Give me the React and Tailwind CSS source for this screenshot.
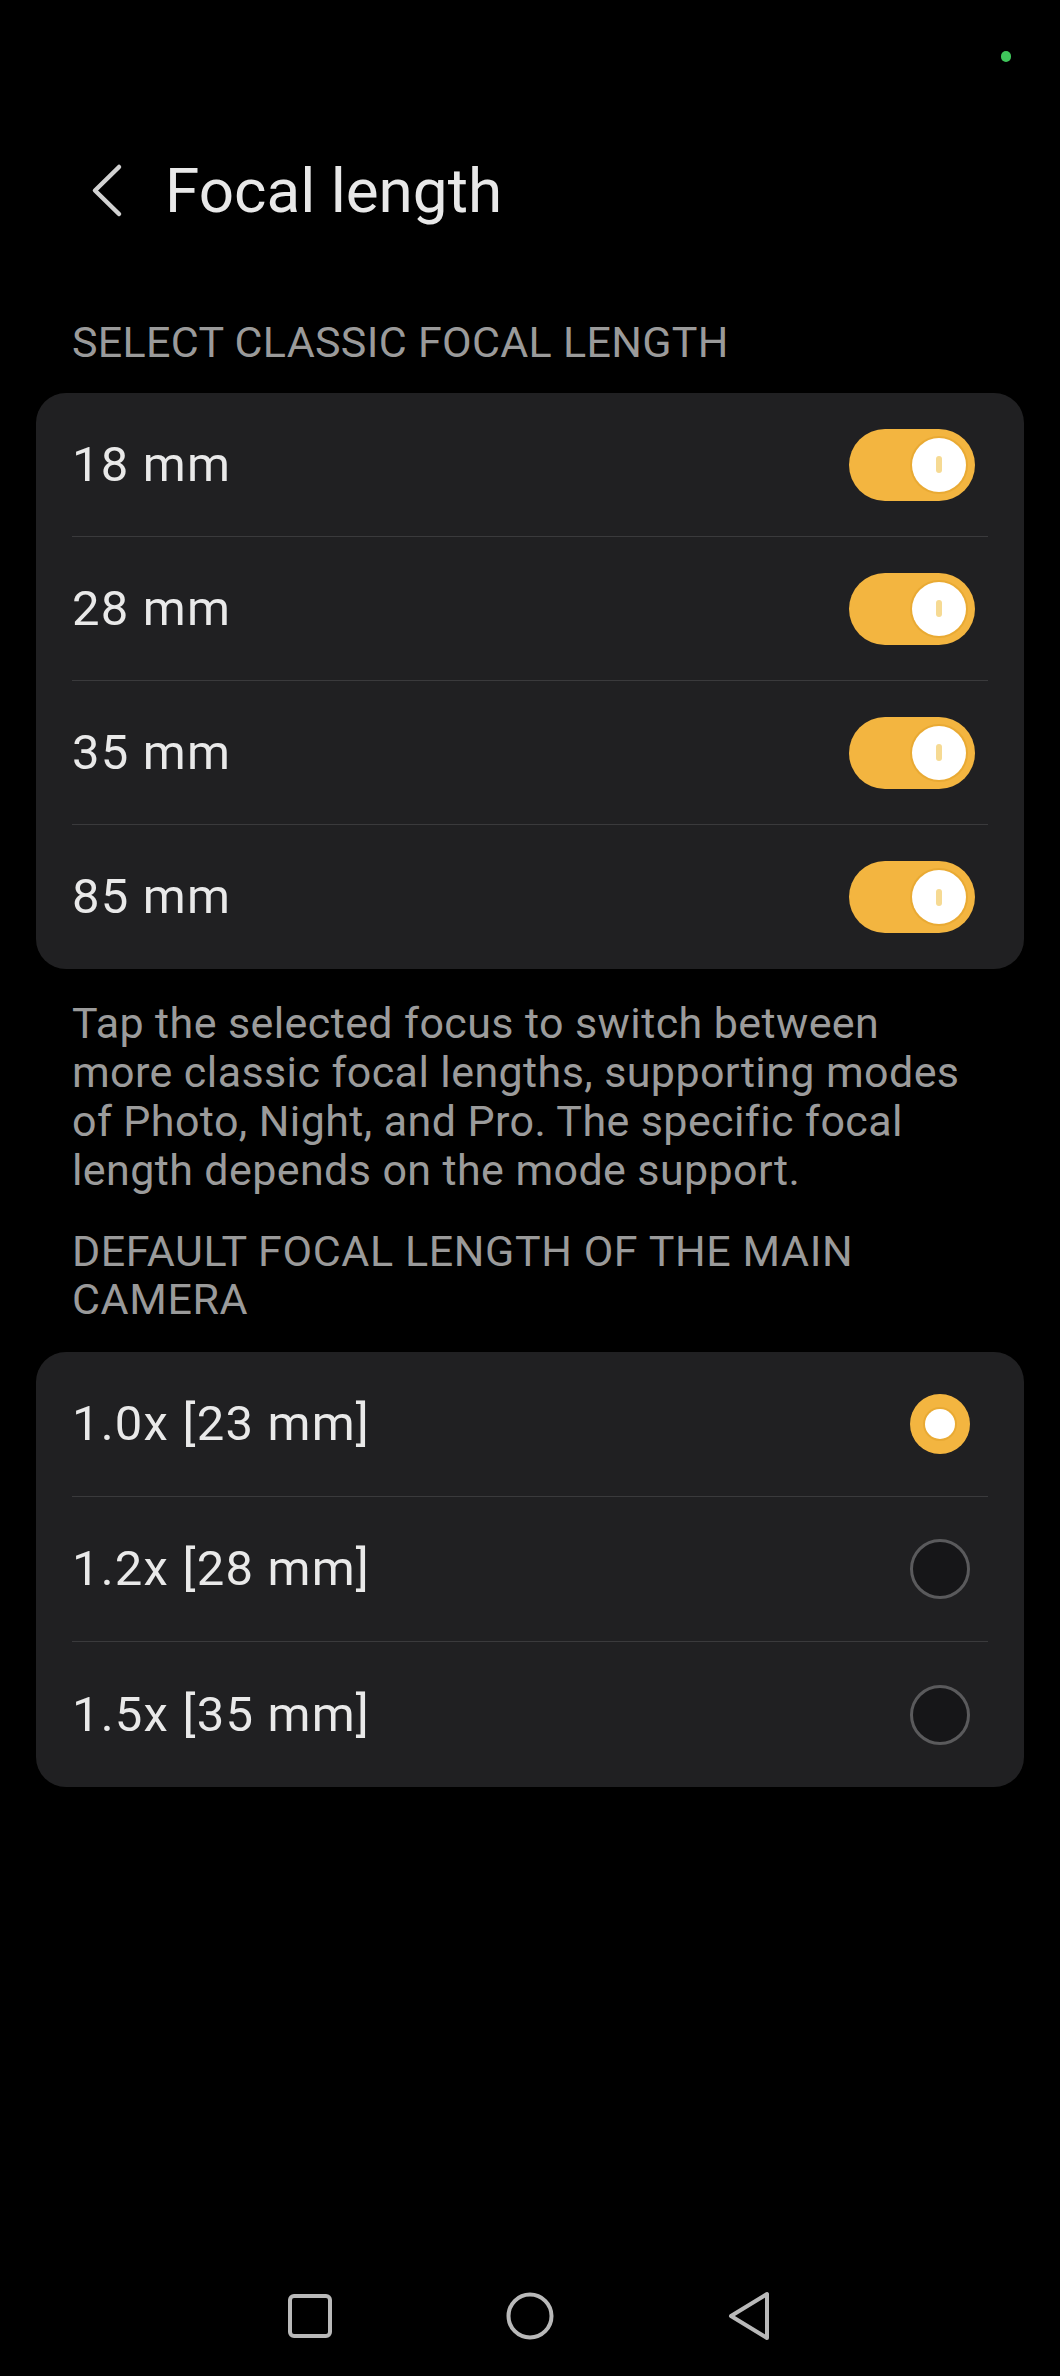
import React, { useState } from 'react';

const lengths = ['18 mm', '28 mm', '35 mm', '85 mm'];
const zooms = ['1.0x [23 mm]', '1.2x [28 mm]', '1.5x [35 mm]'];

function Toggle({ on, onClick }) {
    return (
        <button
            onClick={onClick}
            className={`mr-[13px] w-[126px] h-[72px] rounded-full flex items-center px-[9px] ${on ? 'bg-[#f3b540] justify-end' : 'bg-[#4a4a4c] justify-start'}`}
        >
            <span className="w-[54px] h-[54px] rounded-full bg-white flex items-center justify-center shadow-[0_0_0_2px_rgba(214,150,30,0.35)]">
                <span className="w-[6px] h-[17px] rounded-full bg-[#f6da93]" />
            </span>
        </button>
    );
}

function Radio({ checked }) {
    if (checked) {
        return (
            <span className="mr-[18px] w-[60px] h-[60px] rounded-full bg-[#f3b540] flex items-center justify-center">
                <span className="w-[30px] h-[30px] rounded-full bg-white shadow-[0_0_0_2px_rgba(214,150,30,0.35)]" />
            </span>
        );
    }
    return <span className="mr-[18px] w-[60px] h-[60px] rounded-full border-[3px] border-[#5a5a5c] bg-[#161618]" />;
}

export default function App() {
    const [enabled, setEnabled] = useState([true, true, true, true]);
    const [selected, setSelected] = useState(0);

    const flip = (i) => setEnabled(enabled.map((v, j) => (j === i ? !v : v)));

    return (
        <div className="min-h-[2376px] bg-black flex flex-col font-['Roboto',sans-serif]">
            {/* status bar */}
            <div className="h-[114px] flex justify-end items-start pt-[51px] pr-[49px]">
                <span className="w-[10px] h-[11px] rounded-full bg-[#3fc65b]" />
            </div>

            {/* title */}
            <div className="mt-[41px] h-[72px] flex items-center pl-[89px]">
                <svg width="34" height="58" viewBox="0 0 34 58" fill="none">
                    <path d="M30 5 L6 28.5 L30 52" stroke="#d2d2d2" strokeWidth="4.5" strokeLinecap="round" strokeLinejoin="round" />
                </svg>
                <h1 className="ml-[42px] text-[62px] leading-[72px] text-[#e8e8e8]">Focal length</h1>
            </div>

            <div className="mt-[91px] px-[72px] text-[43px] leading-[48px] tracking-[0.3px] text-[#9a9a9a]">SELECT CLASSIC FOCAL LENGTH</div>

            <div className="mt-[27px] mx-[36px] rounded-[30px] bg-[#202022]">
                {lengths.map((label, i) => (
                    <div key={label} className="px-[36px]">
                        <div className={`h-[144px] flex items-center justify-between ${i < lengths.length - 1 ? 'border-b border-[#3a3a3c]' : ''}`}>
                            <span className="text-[49px] tracking-[1.2px] text-[#e9e9e9]">{label}</span>
                            <Toggle on={enabled[i]} onClick={() => flip(i)} />
                        </div>
                    </div>
                ))}
            </div>

            <p className="mt-[30px] px-[72px] text-[43px] leading-[49px] tracking-[0.4px] text-[#9b9b9b] whitespace-nowrap">
                Tap the selected focus to switch between<br />
                more classic focal lengths, supporting modes<br />
                of Photo, Night, and Pro. The specific focal<br />
                length depends on the mode support.
            </p>

            <div className="mt-[32px] px-[72px] text-[43px] leading-[48px] tracking-[0.6px] text-[#9a9a9a]">
                DEFAULT FOCAL LENGTH OF THE MAIN<br />
                CAMERA
            </div>

            <div className="mt-[29px] mx-[36px] rounded-[30px] bg-[#202022]">
                {zooms.map((label, i) => (
                    <div key={label} className="px-[36px] cursor-pointer" onClick={() => setSelected(i)}>
                        <div className={`h-[145px] flex items-center justify-between ${i < zooms.length - 1 ? 'border-b border-[#3a3a3c]' : ''}`}>
                            <span className="text-[49px] tracking-[1.2px] text-[#e9e9e9]">{label}</span>
                            <Radio checked={selected === i} />
                        </div>
                    </div>
                ))}
            </div>

            {/* nav bar */}
            <div className="mt-auto h-[120px] flex items-center justify-center">
                <div className="w-[660px] grid grid-cols-3 place-items-center">
                    <svg width="46" height="46" viewBox="0 0 46 46" fill="none">
                        <rect x="3" y="3" width="40" height="40" rx="4" stroke="#b9b9b9" strokeWidth="4" />
                    </svg>
                    <svg width="50" height="50" viewBox="0 0 50 50" fill="none">
                        <circle cx="25" cy="25" r="21.5" stroke="#b9b9b9" strokeWidth="4" />
                    </svg>
                    <svg width="46" height="52" viewBox="0 0 46 52" fill="none">
                        <path d="M40 4 L40 48 L4 26 Z" stroke="#b9b9b9" strokeWidth="4" strokeLinejoin="round" />
                    </svg>
                </div>
            </div>
        </div>
    );
}
